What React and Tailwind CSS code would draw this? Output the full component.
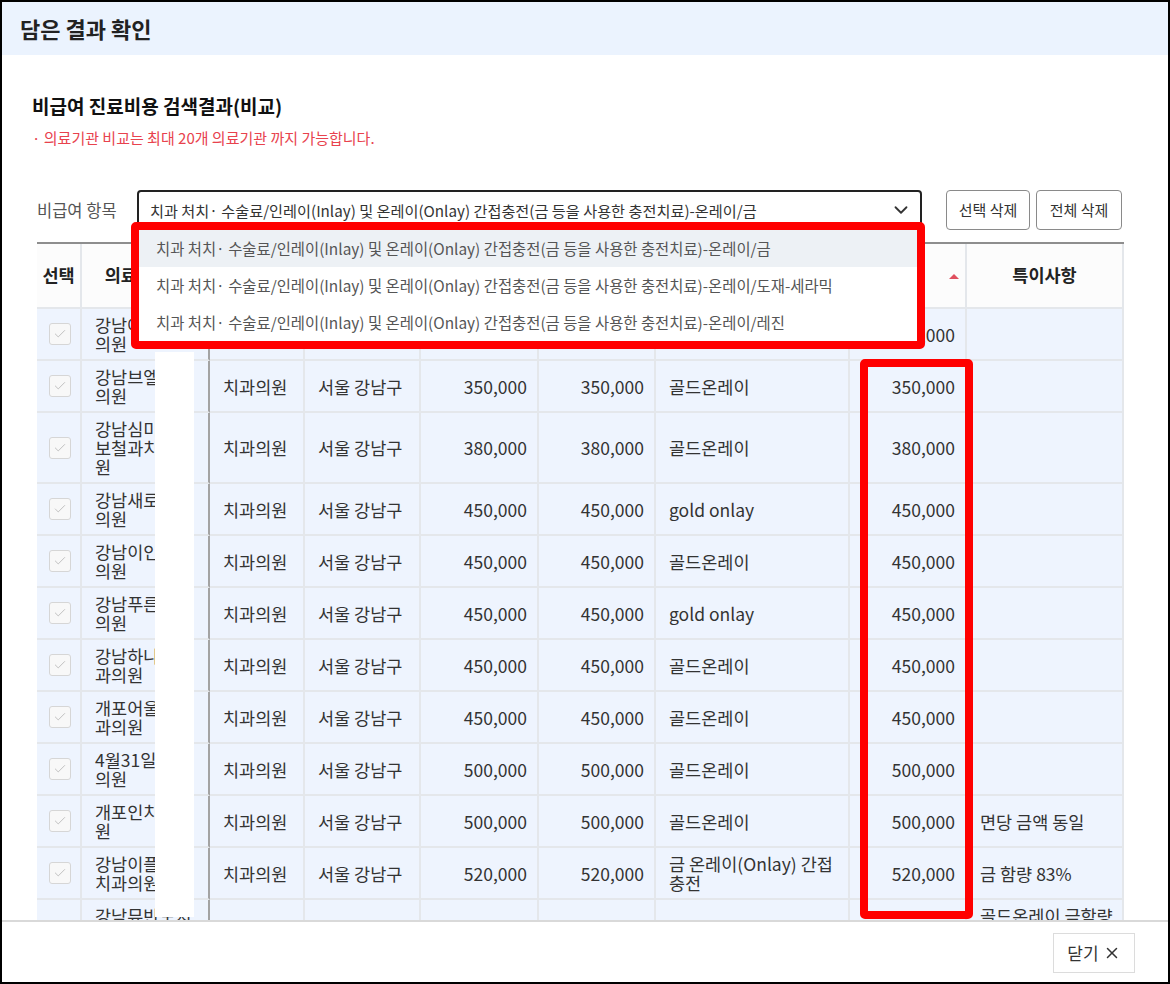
import React from "react";
import { ChevronDown, Check, X } from "lucide-react";

const options = [
  "치과 처치· 수술료/인레이(Inlay) 및 온레이(Onlay) 간접충전(금 등을 사용한 충전치료)-온레이/금",
  "치과 처치· 수술료/인레이(Inlay) 및 온레이(Onlay) 간접충전(금 등을 사용한 충전치료)-온레이/도재-세라믹",
  "치과 처치· 수술료/인레이(Inlay) 및 온레이(Onlay) 간접충전(금 등을 사용한 충전치료)-온레이/레진",
];

const rows = [
  { name: ["강남예인치과", "의원"], price: "300,000", title: "골드온레이", note: "" },
  { name: ["강남브엘치과", "의원"], price: "350,000", title: "골드온레이", note: "" },
  { name: ["강남심미안치", "보철과치과의", "원"], price: "380,000", title: "골드온레이", note: "" },
  { name: ["강남새로치과", "의원"], price: "450,000", title: "gold onlay", note: "" },
  { name: ["강남이인치과", "의원"], price: "450,000", title: "골드온레이", note: "" },
  { name: ["강남푸른치과", "의원"], price: "450,000", title: "gold onlay", note: "" },
  { name: ["강남하나로치", "과의원"], price: "450,000", title: "골드온레이", note: "" },
  { name: ["개포어울림치", "과의원"], price: "450,000", title: "골드온레이", note: "" },
  { name: ["4월31일치과", "의원"], price: "500,000", title: "골드온레이", note: "" },
  { name: ["개포인치과의", "원"], price: "500,000", title: "골드온레이", note: "면당 금액 동일" },
  { name: ["강남이플란트", "치과의원"], price: "520,000", title: "금 온레이(Onlay) 간접 충전", note: "금 함량 83%" },
  { name: ["강남뮤반도치", "과의원", "치과"], price: "550,000", title: "골드온레이", note: "골드온레이 금함량 80% 이상 정품 사용" },
];

const td = "border-b-2 border-r-2 border-[#e4e7eb] px-[12px] py-[6px] leading-[19px] text-[17.5px] text-[#333] align-middle";
const th = "h-[65px] border-b-2 border-r-2 border-[#e4e7eb] px-0 whitespace-nowrap text-[17.5px] font-bold text-[#222] bg-[#fcfcfc]";

function ResultTable() {
  return (
    <table className="table-fixed border-separate border-spacing-0 w-[1087px] border-t-2 border-[#8e8e8e]">
      <colgroup>
        <col className="w-[45px]" />
        <col className="w-[128px]" />
        <col className="w-[95px]" />
        <col className="w-[116px]" />
        <col className="w-[118px]" />
        <col className="w-[117px]" />
        <col className="w-[194px]" />
        <col className="w-[117px]" />
        <col className="w-[157px]" />
      </colgroup>
      <thead>
        <tr>
          <th className={th}>선택</th>
          <th className={th + " border-r-[#a3a3a3]"}>의료기관명</th>
          <th className={th}>종별</th>
          <th className={th}>소재지</th>
          <th className={th}>최저비용</th>
          <th className={th}>최고비용</th>
          <th className={th}>명칭</th>
          <th className={th + " relative"}>
            비용
            <span className="absolute right-[6px] top-[30px] w-0 h-0 border-l-[5px] border-r-[5px] border-b-[5px] border-l-transparent border-r-transparent border-b-[#e0505f]" />
          </th>
          <th className={th + " border-r-0"}>특이사항</th>
        </tr>
      </thead>
      <tbody className="bg-[#eef4fe]">
        {rows.map((r, i) => (
          <tr key={i}>
            <td className={td + " px-0"}>
              <div className="mx-auto w-[22px] h-[22px] rounded-[3px] border border-[#d6d6d6] bg-[#f8f8f8] flex items-center justify-center">
                <Check size={14} strokeWidth={1.5} color="#b8b8b8" />
              </div>
            </td>
            <td className={td + " border-r-[#a3a3a3] pl-[13px] whitespace-nowrap overflow-hidden"}>
              {r.name.map((l, j) => (
                <div key={j}>{l}</div>
              ))}
            </td>
            <td className={td + " pl-[13px] whitespace-nowrap"}>치과의원</td>
            <td className={td + " pl-[13px] whitespace-nowrap"}>서울 강남구</td>
            <td className={td + " text-right pr-[10px]"}>{r.price}</td>
            <td className={td + " text-right pr-[10px]"}>{r.price}</td>
            <td className={td + " pl-[13px] pr-[8px]"}>{r.title}</td>
            <td className={td + " text-right pr-[10px]"}>{r.price}</td>
            <td className={td + " border-r-0 pl-[13px] pr-[6px]"}>{r.note}</td>
          </tr>
        ))}
      </tbody>
    </table>
  );
}

export default function App() {
  return (
    <div className="relative w-[1170px] h-[984px] border-2 border-black bg-white flex flex-col overflow-hidden font-['Noto_Sans_CJK_KR',sans-serif]">
      <div className="h-[53px] shrink-0 bg-[#ebf3fe] flex items-center pl-[18px]">
        <h1 className="text-[22px] font-semibold text-[#222]">담은 결과 확인</h1>
      </div>

      <div className="flex-1 min-h-0 overflow-hidden pt-[38px]">
        <div className="pl-[30px]">
          <h2 className="text-[19px] leading-[25px] font-bold text-[#111]">비급여 진료비용 검색결과(비교)</h2>
          <p className="mt-[10px] text-[15px] leading-[20px] text-[#e8424d]">· 의료기관 비교는 최대 20개 의료기관 까지 가능합니다.</p>
        </div>

        <div className="pl-[35px] mt-[42px] flex items-center h-[40px]">
          <span className="w-[100px] text-[16.5px] text-[#555] whitespace-nowrap">비급여 항목</span>
          <div className="w-[785px] h-[40px] border-2 border-[#222] rounded-[4px] pl-[11px] pr-[8px] flex items-center justify-between">
            <span className="text-[15.2px] text-[#333] whitespace-nowrap">{options[0]}</span>
            <ChevronDown size={22} strokeWidth={2} color="#333" />
          </div>
          <button className="ml-[24px] w-[84px] h-[40px] border border-[#8a8a8a] rounded-[4px] text-[15px] text-[#333] bg-white">선택 삭제</button>
          <button className="ml-[6px] w-[86px] h-[40px] border border-[#8a8a8a] rounded-[4px] text-[15px] text-[#333] bg-white">전체 삭제</button>
        </div>

        <div className="pl-[35px] mt-[12px]">
          <ResultTable />
        </div>
      </div>

      <div className="h-[62px] shrink-0 border-t-2 border-[#d9d9d9] flex justify-end pt-[11px] pr-[33px]">
        <button className="w-[82px] h-[40px] border border-[#dcdcdc] flex items-center justify-center gap-1 text-[17px] text-[#333] bg-white">
          닫기 <X size={18} strokeWidth={2} color="#333" />
        </button>
      </div>

      {/* white block covering part of the name column */}
      <div className="absolute left-[153px] top-[350px] w-[39px] h-[565px] bg-white" />

      {/* open dropdown list with red highlight */}
      <div className="absolute left-[129px] top-[220px] w-[794px] h-[127px] border-[8px] border-[#ff0000] rounded-[5px] bg-white">
        {options.map((o, i) => (
          <div
            key={i}
            className={
              "h-[37px] flex items-center pl-[17px] text-[15.4px] text-[#555] whitespace-nowrap " +
              (i === 0 ? "bg-[#edf1f5]" : "")
            }
          >
            {o}
          </div>
        ))}
      </div>

      {/* red highlight on the price column */}
      <div className="absolute left-[858px] top-[357px] w-[113px] h-[560px] border-[8px] border-[#ff0000] rounded-[5px]" />
    </div>
  );
}
